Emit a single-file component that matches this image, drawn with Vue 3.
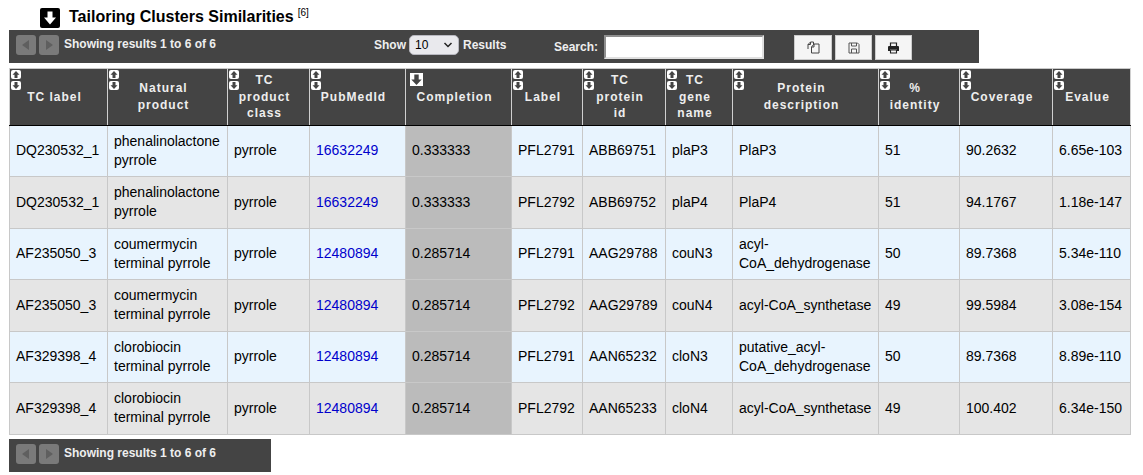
<script setup>
const cols = [98, 120, 82, 96, 106, 71, 83, 67, 146, 81, 93, 78]
const headers = [
  'TC label', 'Natural\nproduct', 'TC\nproduct\nclass', 'PubMedId', 'Completion', 'Label',
  'TC\nprotein\nid', 'TC\ngene\nname', 'Protein\ndescription', '%\nidentity', 'Coverage', 'Evalue'
]
const rows = [
  ['DQ230532_1', 'phenalinolactone\npyrrole', 'pyrrole', '16632249', '0.333333', 'PFL2791', 'ABB69751', 'plaP3', 'PlaP3', '51', '90.2632', '6.65e-103'],
  ['DQ230532_1', 'phenalinolactone\npyrrole', 'pyrrole', '16632249', '0.333333', 'PFL2792', 'ABB69752', 'plaP4', 'PlaP4', '51', '94.1767', '1.18e-147'],
  ['AF235050_3', 'coumermycin\nterminal pyrrole', 'pyrrole', '12480894', '0.285714', 'PFL2791', 'AAG29788', 'couN3', 'acyl-\nCoA_dehydrogenase', '50', '89.7368', '5.34e-110'],
  ['AF235050_3', 'coumermycin\nterminal pyrrole', 'pyrrole', '12480894', '0.285714', 'PFL2792', 'AAG29789', 'couN4', 'acyl-CoA_synthetase', '49', '99.5984', '3.08e-154'],
  ['AF329398_4', 'clorobiocin\nterminal pyrrole', 'pyrrole', '12480894', '0.285714', 'PFL2791', 'AAN65232', 'cloN3', 'putative_acyl-\nCoA_dehydrogenase', '50', '89.7368', '8.89e-110'],
  ['AF329398_4', 'clorobiocin\nterminal pyrrole', 'pyrrole', '12480894', '0.285714', 'PFL2792', 'AAN65233', 'cloN4', 'acyl-CoA_synthetase', '49', '100.402', '6.34e-150']
]
</script>

<template>
  <div class="page">
    <h2 class="title">
      <svg class="title-icon" viewBox="0 0 20 20" width="20" height="20">
        <rect width="20" height="20" rx="2" fill="#000" />
        <path d="M7.5 3.5h5v6h3.5L10 16.5 4 9.500h3.500z" fill="#fff" />
      </svg>
      <span>Tailoring Clusters Similarities</span>
      <sup class="ref">[6]</sup>
    </h2>

    <div class="bar bar-top">
      <div class="nav">
        <span class="nav-btn"><svg viewBox="0 0 20 20" width="20" height="20"><path d="M13 5v10L6 10z" fill="#5f5f5f" /></svg></span>
        <span class="nav-btn"><svg viewBox="0 0 20 20" width="20" height="20"><path d="M7 5v10l7-5z" fill="#5f5f5f" /></svg></span>
      </div>
      <span class="info">Showing results 1 to 6 of 6</span>
      <div class="length">
        <span>Show</span>
        <span class="select-wrap">
          <select class="select"><option>10</option></select>
          <svg class="chevron" viewBox="0 0 10 6" width="10" height="6" fill="none" stroke="#222" stroke-width="1.500"><path d="M1.500 1l3.500 3.500L8.500 1" /></svg>
        </span>
        <span>Results</span>
      </div>
      <div class="search">
        <span>Search:</span>
        <input class="input" type="text" />
      </div>
      <div class="tools">
        <button class="tool">
          <svg viewBox="0 0 13 13" width="13" height="13" fill="none" stroke="#444" stroke-width="1">
            <path d="M1 8V3.500L3.500 1h3v2" />
            <path d="M3.500 1v2.500H1" />
            <path d="M4.500 6l2.500-3h5v9H4.500z" />
            <path d="M7 3v3H4.500" />
          </svg>
        </button>
        <button class="tool tool-narrow">
          <svg viewBox="0 0 12 12" width="12" height="12" fill="none" stroke="#555" stroke-width="1">
            <path d="M1 1h8.500L11 2.500V11H1z" />
            <path d="M3.500 1v3h5V1M3.500 11V7h5v4" />
          </svg>
        </button>
        <button class="tool tool-narrow">
          <svg viewBox="0 0 13 12" width="13" height="12">
            <path d="M3.500 4V1h6v3" fill="none" stroke="#222" stroke-width="1.200" />
            <path d="M1 5q0-1 1-1h9q1 0 1 1v4H10V7.500H3V9H1z" fill="#222" />
            <path d="M3.500 8h6v3h-6z" fill="none" stroke="#222" stroke-width="1.100" />
          </svg>
        </button>
      </div>
    </div>

    <table class="grid">
      <colgroup>
        <col v-for="(w, i) in cols" :key="i" :style="{ width: w + 'px' }" />
      </colgroup>
      <thead>
        <tr>
          <th v-for="(h, i) in headers" :key="i">
            <template v-if="i === 4">
              <span class="sorted">
                <svg viewBox="0 0 13 13" width="13" height="13"><path d="M4.300 1.500h4.400v5h3L6.500 12 1.300 6.500h3z" fill="#444" /></svg>
              </span>
            </template>
            <template v-else>
              <span class="sort sort-up">
                <svg viewBox="0 0 10 9" width="10" height="9"><path d="M5 1L8.500 4.800H6.500V8h-3V4.800h-2z" fill="#444" /></svg>
              </span>
              <span class="sort sort-down">
                <svg viewBox="0 0 10 9" width="10" height="9"><path d="M5 8L8.500 4.200H6.500V1h-3v3.200h-2z" fill="#444" /></svg>
              </span>
            </template>
            {{ h }}
          </th>
        </tr>
      </thead>
      <tbody>
        <tr v-for="(r, ri) in rows" :key="ri" :class="ri % 2 ? 'even' : 'odd'">
          <td v-for="(c, ci) in r" :key="ci" :class="{ active: ci === 4 }">
            <a v-if="ci === 3" class="link" href="#">{{ c }}</a>
            <template v-else>{{ c }}</template>
          </td>
        </tr>
      </tbody>
    </table>

    <div class="bar bar-bottom">
      <div class="nav">
        <span class="nav-btn"><svg viewBox="0 0 20 20" width="20" height="20"><path d="M13 5v10L6 10z" fill="#5f5f5f" /></svg></span>
        <span class="nav-btn"><svg viewBox="0 0 20 20" width="20" height="20"><path d="M7 5v10l7-5z" fill="#5f5f5f" /></svg></span>
      </div>
      <span class="info">Showing results 1 to 6 of 6</span>
    </div>
  </div>
</template>

<style scoped>
.page {
  width: 1143px;
  height: 475px;
  overflow: hidden;
  padding-left: 9px;
  box-sizing: border-box;
  font-family: "Liberation Sans", Arial, sans-serif;
  font-size: 14px;
  color: #000;
}
.title {
  display: flex;
  align-items: flex-start;
  height: 30px;
  margin: 0;
  padding: 8px 0 0 31px;
  box-sizing: border-box;
  font-size: 16px;
  font-weight: bold;
  line-height: 18px;
}
.title-icon {
  margin-right: 9px;
  flex: none;
}
.ref {
  margin-left: 4px;
  margin-top: -1px;
  font-size: 10px;
  font-weight: normal;
  line-height: 12px;
}
.bar {
  display: flex;
  align-items: flex-start;
  height: 33px;
  box-sizing: border-box;
  padding: 5px 0 0 7px;
  background: #444;
  color: #eee;
  font-size: 12px;
  font-weight: bold;
  line-height: 14px;
}
.bar-top {
  width: 970px;
}
.bar-bottom {
  width: 262px;
  margin-top: 4px;
}
.nav {
  display: flex;
  gap: 3px;
  flex: none;
}
.nav-btn {
  display: block;
  width: 20px;
  height: 20px;
  background: #7a7a7a;
  border-radius: 3px;
}
.nav-btn svg {
  display: block;
}
.info {
  margin-left: 5px;
  margin-top: 2px;
  width: 310px;
  flex: none;
}
.bar-bottom .info {
  width: auto;
}
.length {
  display: flex;
  align-items: center;
  height: 20px;
  flex: none;
  width: 180px;
}
.select-wrap {
  position: relative;
  display: block;
  width: 50px;
  height: 20px;
  margin: 0 4px 0 3px;
}
.select {
  display: block;
  width: 50px;
  height: 20px;
  margin: 0;
  padding: 0 0 0 5px;
  box-sizing: border-box;
  appearance: none;
  background: #e9e9ed;
  border: 1px solid #b8b8c0;
  border-radius: 5px;
  color: #000;
  font-family: "Liberation Sans", Arial, sans-serif;
  font-size: 12px;
}
.chevron {
  position: absolute;
  right: 6px;
  top: 7px;
  pointer-events: none;
}
.search {
  display: flex;
  align-items: center;
  height: 24px;
  flex: none;
  gap: 6px;
}
.input {
  width: 160px;
  height: 24px;
  box-sizing: border-box;
  margin: 0;
  padding: 1px 2px;
  border: 2px solid;
  border-color: #8f8f8f #e0e0e0 #e0e0e0 #8f8f8f;
  background: #fff;
}
.tools {
  display: flex;
  gap: 3px;
  margin-left: 30px;
}
.tool {
  display: flex;
  align-items: center;
  justify-content: center;
  width: 38px;
  height: 25px;
  padding: 0;
  box-sizing: border-box;
  background: #f5f5f5;
  border: 1px solid #ccc;
}
.tool-narrow {
  width: 37px;
}
.grid {
  table-layout: fixed;
  width: 1121px;
  margin-top: 5px;
  border-collapse: collapse;
  border-top: 1px solid #c8c8c8;
}
th {
  position: relative;
  height: 54px;
  padding: 3px 14px 3px 6px;
  box-sizing: border-box;
  background: #444;
  color: #eee;
  font-size: 12px;
  font-weight: bold;
  line-height: 16.5px;
  letter-spacing: 1px;
  text-align: center;
  white-space: pre-line;
  border-left: 1px solid #d0d0d0;
  border-right: 1px solid #d0d0d0;
  border-bottom: 1px solid #000;
}
.sort {
  position: absolute;
  left: 1px;
  display: block;
  width: 10px;
  height: 9px;
  background: #fff;
  border-radius: 2px;
}
.sort svg,
.sorted svg {
  display: block;
}
.sort-up {
  top: 1px;
}
.sort-down {
  top: 12px;
}
.sorted {
  position: absolute;
  left: 4px;
  top: 4px;
  display: block;
  width: 13px;
  height: 13px;
  background: #fff;
}
td {
  padding: 6px;
  border: 1px solid #c8c8c8;
  line-height: 19.25px;
  white-space: pre-line;
  overflow: hidden;
  vertical-align: middle;
}
.odd td {
  background: #e8f4fe;
}
.even td {
  background: #e5e5e5;
}
.odd td.active,
.even td.active {
  background: #bbb;
}
.link {
  color: #0000cc;
  text-decoration: none;
}
</style>
